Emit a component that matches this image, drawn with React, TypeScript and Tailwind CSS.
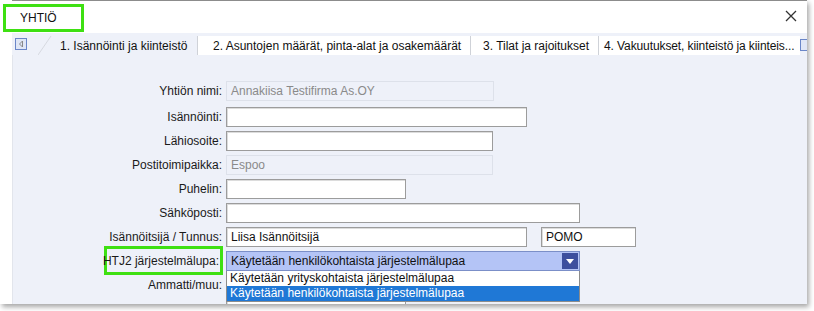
import React from 'react'

const font = { fontFamily: '"Liberation Sans", Arial, sans-serif' }

function Field({ w, value, disabled }: { w: number; value?: string; disabled?: boolean }) {
  return (
    <div
      style={{ width: w }}
      className={
        disabled
          ? 'h-[20px] border border-[#dde1ea] bg-[#eef1f9] px-[4px] text-[12px] leading-[18px] text-[#8a8a8a]'
          : 'h-[20px] border border-[#9c9c9c] bg-white px-[4px] text-[12px] leading-[18px] text-[#111] shadow-[inset_1px_1px_0_#dcdcdc]'
      }
    >
      {value}
    </div>
  )
}

function Row({ label, children, mark }: { label: string; children: React.ReactNode; mark?: boolean }) {
  return (
    <div className="flex h-[20px] items-center gap-[4px]">
      <div className="relative w-[209px] text-right text-[12px] text-[#1a1a1a]">
        {mark && <div className="absolute left-[91px] right-[-1px] top-[-6px] bottom-[-5px] border-[3px] border-[#3ee012]" />}
        <span className={mark ? 'relative pr-[3px]' : ''}>{label}</span>
      </div>
      {children}
    </div>
  )
}

export default function App() {
  return (
    <div style={font} className="h-[311px] w-[814px] overflow-hidden bg-white">
      <div className="relative h-[304px] w-[807px] overflow-hidden bg-white shadow-[2px_3px_5px_rgba(0,0,0,0.35)]">
        {/* title */}
        <div className="ml-[12px] h-[2px] border-t border-[#8c8c8c]" />
        <div className="flex h-[31px] items-center justify-between pl-[3px] pr-[10px]">
          <div className="flex h-[28px] w-[81px] items-center border-[3px] border-[#3ee012] pl-[14px] text-[12px] text-[#111]">
            YHTIÖ
          </div>
          <svg width="12" height="12" viewBox="0 0 12 12" className="mt-[-3px]">
            <path d="M1 1 L11 11 M11 1 L1 11" stroke="#333" strokeWidth="1.3" />
          </svg>
        </div>

        {/* tabs */}
        <div className="ml-[12px] flex h-[22px] bg-[#eef1f9]">
          <div className="flex w-[26px] shrink-0 items-center pl-[3px]">
            <div className="flex h-[12px] w-[12px] items-center justify-center border border-[#6a86c8] bg-[#dfe6f6]">
              <svg width="6" height="8" viewBox="0 0 6 8"><path d="M4.5 1 L1.5 4 L4.5 7 Z" fill="none" stroke="#888" strokeWidth="1" /></svg>
            </div>
          </div>
          <div className="relative flex h-full w-[159px] shrink-0 items-end">
            <svg width="14" height="19" viewBox="0 0 14 19" className="absolute left-0 bottom-0">
              <path d="M0 19 L13 0" stroke="#d6d9e0" strokeWidth="1" />
            </svg>
            <div className="flex h-[19px] w-full items-center whitespace-nowrap pl-[22px] text-[12px] text-[#111]">1. Isännöinti ja kiinteistö</div>
          </div>
          <div className="mt-[3px] flex h-[19px] w-[273px] shrink-0 items-center whitespace-nowrap border-l border-[#cfd2d8] bg-white pl-[15px] text-[12px] text-[#111]">
            2. Asuntojen määrät, pinta-alat ja osakemäärät
          </div>
          <div className="mt-[3px] flex h-[19px] w-[128px] shrink-0 items-center whitespace-nowrap border-l border-[#cfd2d8] bg-white pl-[12px] text-[12px] text-[#111]">
            3. Tilat ja rajoitukset
          </div>
          <div className="mt-[3px] flex h-[19px] w-[202px] shrink-0 items-center overflow-hidden whitespace-nowrap border-l border-[#cfd2d8] bg-white pl-[5px] text-[12px] tracking-[-0.1px] text-[#111]">
            4. Vakuutukset, kiinteistö ja kiinteis...
          </div>
          <div className="mt-[6px] h-[12px] w-[8px] shrink-0 border border-r-0 border-[#6a86c8] bg-[#dfe6f6]" />
        </div>

        {/* body */}
        <div className="relative ml-[12px] flex h-[249px] flex-col gap-[4px] border-l border-[#e2e5ec] bg-[#eef1f9] pt-[26px]">
          <div className="mb-[2px]">
            <Row label="Yhtiön nimi:"><Field w={268} value="Annakiisa Testifirma As.OY" disabled /></Row>
          </div>
          <Row label="Isännöinti:"><Field w={301} /></Row>
          <Row label="Lähiosoite:"><Field w={267} /></Row>
          <Row label="Postitoimipaikka:"><Field w={267} value="Espoo" disabled /></Row>
          <Row label="Puhelin:"><Field w={180} /></Row>
          <Row label="Sähköposti:"><Field w={354} /></Row>
          <Row label="Isännöitsijä / Tunnus:">
            <Field w={301} value="Liisa Isännöitsijä" />
            <div className="w-[6px]" />
            <Field w={95} value="POMO" />
          </Row>
          <Row label="HTJ2 järjestelmälupa:" mark>
            <div className="relative">
              <div className="flex h-[20px] w-[354px] items-center justify-between border border-[#7b8fc8] bg-[#b4c4f6] pl-[4px] pr-[1px] text-[12px] text-[#111]">
                <span>Käytetään henkilökohtaista järjestelmälupaa</span>
                <div className="flex h-[16px] w-[16px] items-center justify-center bg-[#3d4f9e]">
                  <svg width="8" height="5" viewBox="0 0 8 5"><path d="M0 0 L8 0 L4 5 Z" fill="#fff" /></svg>
                </div>
              </div>
              <div className="absolute left-0 top-[20px] z-10 w-[354px] border border-t-0 border-[#8c8c8c] bg-white text-[12px]">
                <div className="h-[15px] pl-[3px] leading-[15px] text-[#111]">Käytetään yrityskohtaista järjestelmälupaa</div>
                <div className="h-[15px] bg-[#1f78d6] pl-[3px] leading-[15px] text-white">Käytetään henkilökohtaista järjestelmälupaa</div>
              </div>
            </div>
          </Row>
          <Row label="Ammatti/muu:"><Field w={180} /></Row>
          <Row label="Puhelin:"><Field w={180} /></Row>
        </div>
      </div>
    </div>
  )
}
